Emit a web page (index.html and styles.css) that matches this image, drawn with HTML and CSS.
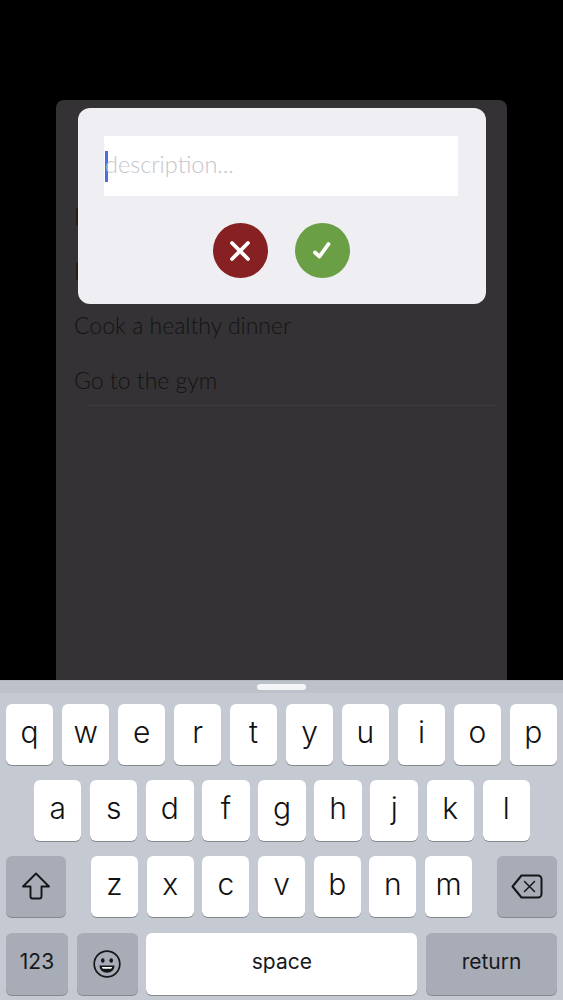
FILE: index.html
```html
<!DOCTYPE html>
<html lang="en">
<head>
    <meta charset="UTF-8">
    <meta name="viewport" content="width=device-width, initial-scale=1.0">
    <title>Tasks</title>
    <link rel="stylesheet" href="styles.css">
</head>
<body>
    <div class="screen">
        <main class="card">
            <ul class="task-list">
                <li class="task">I</li>
                <li class="task">I</li>
                <li class="task">Cook a healthy dinner</li>
                <li class="task">Go to the gym</li>
            </ul>
            <div class="list-end"></div>
        </main>

        <!-- add task dialog, sits over the list -->
        <div class="dialog">
            <div class="field">
                <span class="caret"></span>
                <span class="placeholder">description...</span>
            </div>
            <div class="actions">
                <button class="round-btn cancel" aria-label="cancel">
                    <svg width="24" height="24" viewBox="0 0 24 24"><path d="M4 4l16 16M20 4L4 20" stroke="#fff" stroke-width="3.800" stroke-linecap="round" fill="none"/></svg>
                </button>
                <button class="round-btn confirm" aria-label="confirm">
                    <svg width="24" height="24" viewBox="0 0 24 24"><path d="M5 13.500l4.500 4 9-12.500" stroke="#fff" stroke-width="3.800" stroke-linecap="round" stroke-linejoin="round" fill="none"/></svg>
                </button>
            </div>
        </div>

        <section class="keyboard">
            <div class="kb-top"><span class="kb-handle"></span></div>
            <div class="kb-rows">
                <div class="kb-row">
                    <div class="key">q</div><div class="key">w</div><div class="key">e</div><div class="key">r</div><div class="key">t</div><div class="key">y</div><div class="key">u</div><div class="key">i</div><div class="key">o</div><div class="key">p</div>
                </div>
                <div class="kb-row home">
                    <div class="key">a</div><div class="key">s</div><div class="key">d</div><div class="key">f</div><div class="key">g</div><div class="key">h</div><div class="key">j</div><div class="key">k</div><div class="key">l</div>
                </div>
                <div class="kb-row bottom">
                    <div class="key mod shift">
                        <svg width="30" height="29" viewBox="0 0 30 29"><path d="M15 1.500L2 14.500h7.500v10a2 2 0 0 0 2 2h7a2 2 0 0 0 2-2v-10H28z" fill="none" stroke="#15161a" stroke-width="1.900" stroke-linejoin="round"/></svg>
                    </div>
                    <div class="letters">
                        <div class="key">z</div><div class="key">x</div><div class="key">c</div><div class="key">v</div><div class="key">b</div><div class="key">n</div><div class="key">m</div>
                    </div>
                    <div class="key mod shift">
                        <svg width="32" height="25" viewBox="0 0 32 25"><path d="M10.500 1.500H27a3.500 3.500 0 0 1 3.500 3.500v15a3.500 3.500 0 0 1-3.500 3.500H10.500L1.500 12.500z" fill="none" stroke="#15161a" stroke-width="2" stroke-linejoin="round"/><path d="M13.500 7.500l10 10M23.500 7.500l-10 10" stroke="#15161a" stroke-width="1.500" stroke-linecap="round"/></svg>
                    </div>
                </div>
                <div class="kb-row last">
                    <div class="key mod label num">123</div>
                    <div class="key mod emoji">
                        <svg width="28" height="28" viewBox="0 0 28 28"><circle cx="14" cy="14" r="12.800" fill="none" stroke="#15161a" stroke-width="1.700"/><ellipse cx="9.800" cy="10.500" rx="1.800" ry="2.300" fill="#15161a"/><ellipse cx="18.200" cy="10.500" rx="1.800" ry="2.300" fill="#15161a"/><path d="M6.500 15.500h15c0 4.500-3.200 7.200-7.500 7.200s-7.500-2.700-7.500-7.200z" fill="#15161a"/><path d="M8.800 17h10.400c-.3.900-.7 1.400-1.200 1.700H10c-.5-.3-.9-.8-1.200-1.700z" fill="#fff"/></svg>
                    </div>
                    <div class="key label space">space</div>
                    <div class="key mod label return">return</div>
                </div>
            </div>
        </section>
    </div>
</body>
</html>
```

FILE: styles.css
```css
* { box-sizing: border-box; }

html, body {
    margin: 0;
    height: 100%;
}

body {
    background: #000;
    font-family: 'Inter', 'Liberation Sans', sans-serif;
}

.screen {
    position: relative;
    height: 1000px;
    display: flex;
    flex-direction: column;
    overflow: hidden;
}

/* list card behind the dialog */
.card {
    flex: 1;
    margin: 100px 56px 0;
    padding-top: 90px;
    background: #343234;
    border-radius: 8px 8px 0 0;
}

.task-list {
    list-style: none;
    margin: 0;
    padding: 0 0 0 18px;
}

.task {
    height: 54.5px;
    line-height: 52px;
    font-family: 'Lato', sans-serif;
    font-weight: 300;
    font-size: 23px;
    color: #141315;
}

.list-end {
    height: 1px;
    margin: -3px 10px 0 32px;
    background: #3e3c3e;
}

/* dialog */
.dialog {
    position: absolute;
    top: 108px;
    left: 78px;
    width: 408px;
    height: 196px;
    padding: 28px 28px 0 26px;
    background: #efeef2;
    border-radius: 12px;
}

.field {
    height: 60px;
    background: #fff;
    display: flex;
    align-items: center;
    font-family: 'Lato', sans-serif;
    font-weight: 300;
    font-size: 23.500px;
}

.caret {
    flex: none;
    width: 3px;
    height: 31px;
    margin: 0 -3px 0 1px;
    background: #4a6de5;
}

.placeholder {
    color: #c6c5ca;
    margin-top: -4px;
}

.actions {
    display: flex;
    justify-content: center;
    gap: 27px;
    margin-top: 27px;
}

.round-btn {
    width: 55px;
    height: 55px;
    padding: 0;
    border: none;
    border-radius: 50%;
    display: flex;
    align-items: center;
    justify-content: center;
}

.cancel { background: #862022; }
.confirm { background: #6a9f45; }

/* keyboard */
.keyboard {
    height: 320px;
    background: #c4c9d2;
}

.kb-top {
    height: 13px;
    background: #bdc1ca;
    border-top: 1px solid #b3b7bf;
    display: flex;
    justify-content: center;
    padding-top: 3px;
}

.kb-handle {
    width: 49px;
    height: 6px;
    background: #f4f5f7;
    border-radius: 3px;
}

.kb-rows {
    padding: 11px 6px 0;
    display: flex;
    flex-direction: column;
    gap: 15.200px;
}

.kb-row {
    display: flex;
    gap: 8.700px;
    height: 61px;
}

.kb-row.home { padding: 0 27px 0 28px; }
.kb-row.bottom { justify-content: space-between; }
.kb-row.last { height: 62px; }

.letters {
    display: flex;
    gap: 8.700px;
    width: 381px;
}

.key {
    flex: 1;
    background: #fff;
    border-radius: 6px;
    box-shadow: 0 1px 0 #85888f;
    display: flex;
    align-items: center;
    justify-content: center;
    font-size: 30px;
    font-weight: 300;
    line-height: 1;
    padding-bottom: 5px;
    color: #111;
}

.key.mod {
    background: #a8acb6;
    padding-bottom: 0;
}

.key.label {
    font-size: 21px;
    font-weight: 400;
    color: #17181c;
    padding-bottom: 4px;
}

.key.shift { flex: 0 0 60px; }
.key.num { flex: 0 0 62px; }
.key.emoji { flex: 0 0 61px; }
.key.space { flex: 0 0 271px; }
.key.return { flex: 0 0 131px; }
```
